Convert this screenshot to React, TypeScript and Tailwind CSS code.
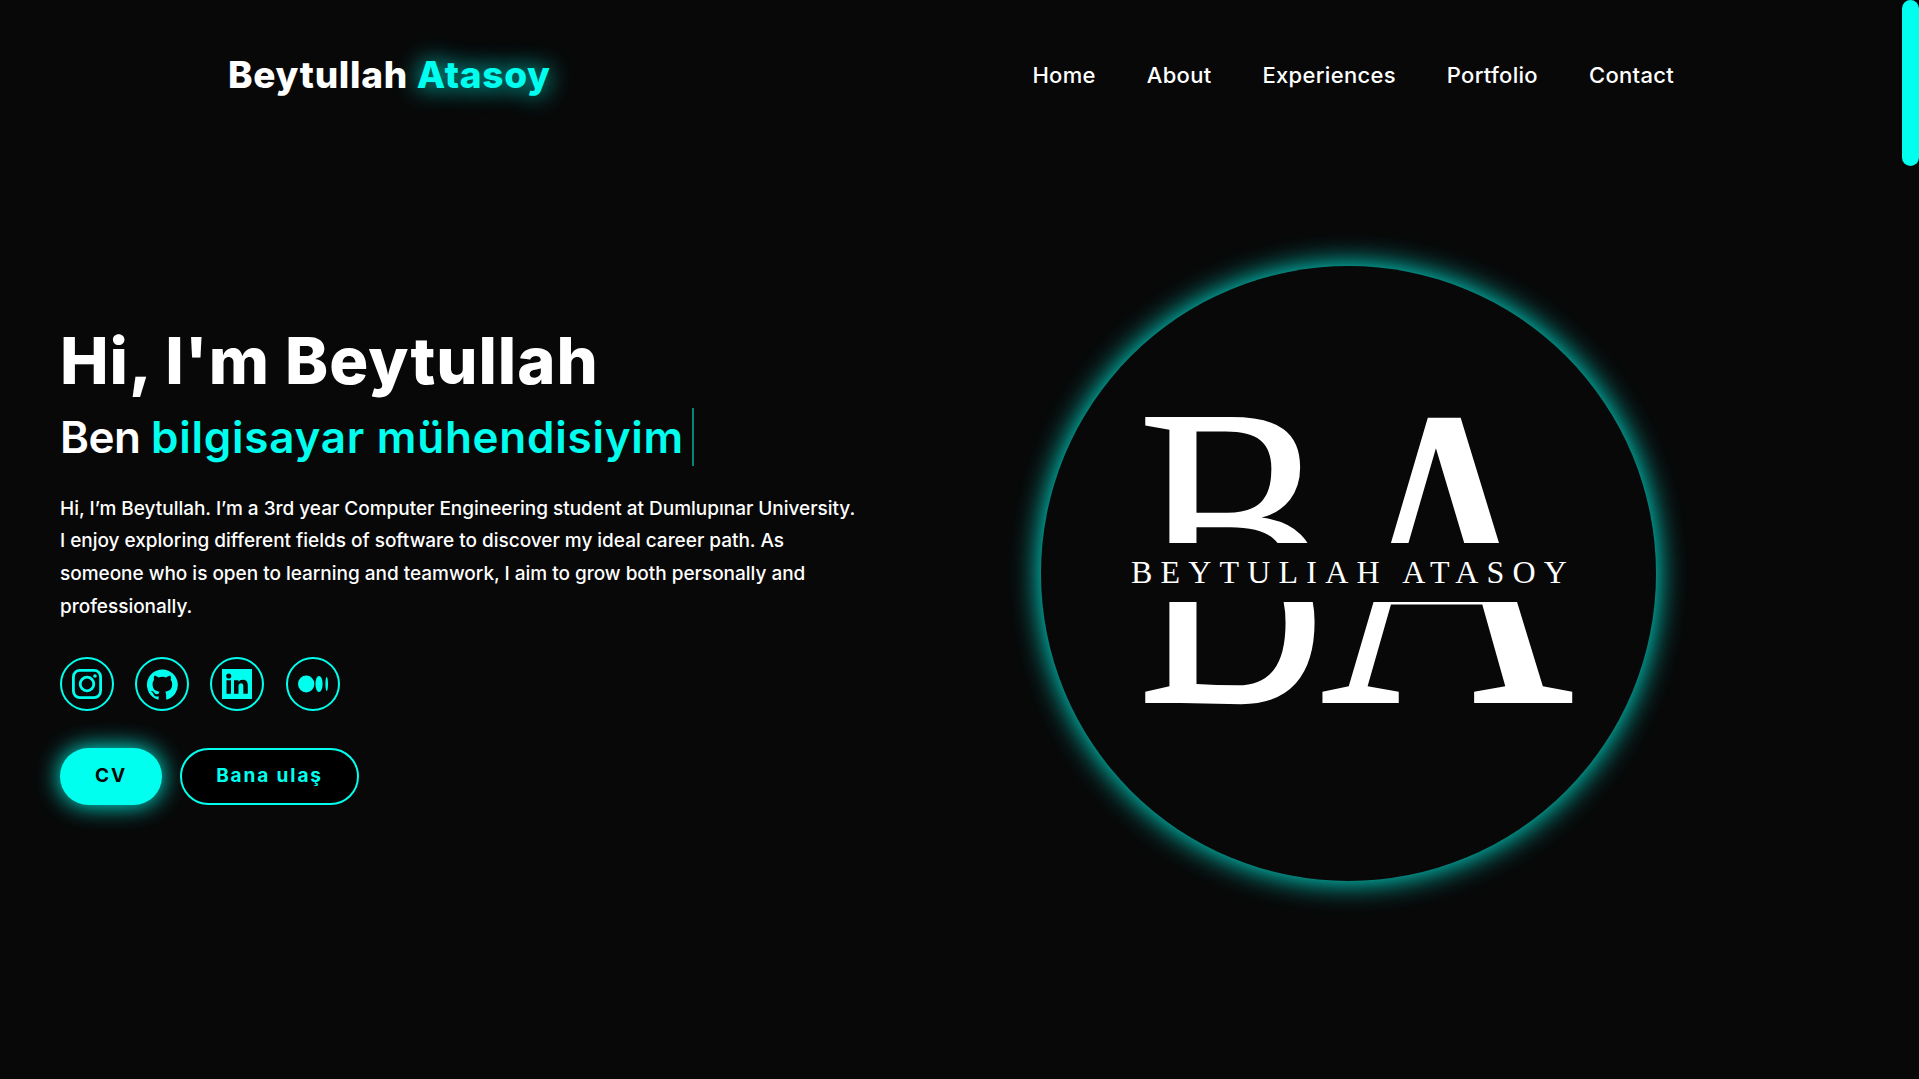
import { useState } from 'react';

const navLinks = ['Home', 'About', 'Experiences', 'Portfolio', 'Contact'];

const Logo = () => (
  <svg viewBox="0 0 615 615" className="w-full h-full">
    <defs>
      <clipPath id="topCut"><rect x="0" y="0" width="615" height="277" /></clipPath>
      <clipPath id="bottomCut"><rect x="0" y="336" width="615" height="279" /></clipPath>
    </defs>
    <g clipPath="url(#topCut)" fill="#fff" fontFamily="'Liberation Serif', serif">
      <text transform="translate(96 366) scale(0.665 0.76)" fontSize="432">B</text>
      <text transform="translate(278 437) scale(0.82 1)" fontSize="432">A</text>
    </g>
    <g clipPath="url(#bottomCut)" fill="#fff" fontFamily="'Liberation Serif', serif">
      <text transform="translate(96 437) scale(0.665 1)" fontSize="432">B</text>
      <text transform="translate(278 437) scale(0.82 1)" fontSize="432">A</text>
    </g>
    <text x="312" y="317" fill="#fff" fontFamily="'Liberation Serif', serif" fontSize="32" textAnchor="middle" letterSpacing="8.2">
      BEYTULIAH ATASOY
    </text>
  </svg>
);

const SocialIcon = ({ children }: { children: React.ReactNode }) => (
  <a className="w-[54px] h-[54px] rounded-full border-2 border-[#00ffee] flex items-center justify-center text-[#00ffee]">
    {children}
  </a>
);

export default function App() {
  const [role] = useState('bilgisayar mühendisiyim');

  return (
    <div className="relative h-[1079px] overflow-hidden bg-[#080808] text-white font-['Inter','Liberation_Sans',sans-serif]">
      <div className="absolute top-0 right-0 w-[17px] h-[166px] rounded-full bg-[#00ffee]" />

      <header className="h-[150px] flex items-center justify-between pl-[228px] pr-[245px]">
        <a className="text-[37px] font-extrabold tracking-[0.7px]">
          Beytullah <span className="text-[#00ffee] [text-shadow:0_0_25px_#00ffee]">Atasoy</span>
        </a>
        <nav className="flex gap-[51px] text-[22px] font-medium tracking-[0.3px]">
          {navLinks.map((link) => (
            <a key={link}>{link}</a>
          ))}
        </nav>
      </header>

      <section className="flex items-center h-[850px] pl-[60px] pr-[263px] pb-[27px]">
        <div className="w-[800px] pt-[4px]">
          <h1 className="text-[65px] font-extrabold leading-[1.2] tracking-[0.95px]">Hi, I'm Beytullah</h1>
          <h3 className="flex items-center text-[44px] font-semibold leading-[64px] mt-[5px] tracking-[0.75px]">
            <span className="tracking-[-0.5px]">Ben&nbsp;</span>
            <span className="text-[#00ffee]">{role}</span>
            <span className="ml-[8px] w-[2px] h-[58px] bg-[#00ffee]/50" />
          </h3>
          <p className="mt-[24px] text-[19px] font-medium leading-[32.6px] tracking-[-0.02px]">
            Hi, I’m Beytullah. I’m a 3rd year Computer Engineering student at Dumlupınar University. I enjoy exploring different fields of software to discover my ideal career path. As someone who is open to learning and teamwork, I aim to grow both personally and professionally.
          </p>
          <div className="flex gap-[21.2px] mt-[34px]">
            <SocialIcon>
              <svg viewBox="0 0 30 30" className="w-[30px] h-[30px]" fill="none" stroke="currentColor" strokeWidth="2.8">
                <rect x="1.4" y="1.4" width="27.2" height="27.2" rx="6.5" />
                <circle cx="15" cy="15" r="6.8" />
                <circle cx="23" cy="7" r="1.8" fill="currentColor" stroke="none" />
              </svg>
            </SocialIcon>
            <SocialIcon>
              <svg viewBox="0 0 24 24" className="w-[31px] h-[31px]" fill="currentColor">
                <path d="M12 .3a12 12 0 0 0-3.800 23.400c.6.1.8-.3.8-.6v-2c-3.300.7-4-1.600-4-1.600-.6-1.400-1.400-1.800-1.400-1.800-1-.7.1-.7.1-.7 1.200.1 1.800 1.200 1.800 1.200 1 1.800 2.800 1.300 3.500 1 .1-.8.4-1.300.8-1.600-2.700-.3-5.500-1.300-5.500-5.900 0-1.300.5-2.400 1.200-3.200-.1-.3-.5-1.500.1-3.200 0 0 1-.3 3.300 1.200a11.500 11.500 0 0 1 6 0c2.300-1.500 3.300-1.200 3.300-1.200.6 1.700.2 2.900.1 3.200.8.8 1.200 1.900 1.200 3.200 0 4.600-2.800 5.600-5.500 5.900.4.4.8 1.100.8 2.200v3.300c0 .3.2.7.8.6A12 12 0 0 0 12 .3" />
              </svg>
            </SocialIcon>
            <SocialIcon>
              <svg viewBox="0 0 24 24" className="w-[36px] h-[36px]" fill="currentColor">
                <path fillRule="evenodd" d="M2 2h20v20H2zM5 9.500v9h3v-9zM6.500 5a1.700 1.700 0 1 0 0 3.400 1.700 1.700 0 0 0 0-3.400zM10 9.500v9h3v-5c0-1.300.7-2 1.700-2s1.500.7 1.500 2v5h3v-5.500c0-2.700-1.400-3.800-3.300-3.800-1.400 0-2.300.6-2.900 1.500V9.500z" />
              </svg>
            </SocialIcon>
            <SocialIcon>
              <svg viewBox="0 0 30 18" className="w-[30px] h-[18px]" fill="currentColor">
                <ellipse cx="8.200" cy="9" rx="8.200" ry="8.500" />
                <ellipse cx="21" cy="9" rx="3.600" ry="8" />
                <ellipse cx="28.700" cy="9" rx="1.300" ry="7" />
              </svg>
            </SocialIcon>
          </div>
          <div className="flex gap-[18px] mt-[37px]">
            <a className="w-[102px] h-[57px] rounded-full bg-[#00ffee] text-[#060606] flex items-center justify-center text-[19px] font-bold tracking-[1.9px] shadow-[0_0_25px_#00ffee]">
              CV
            </a>
            <a className="w-[179px] h-[57px] rounded-full border-2 border-[#00ffee] bg-black text-[#00ffee] flex items-center justify-center text-[19px] font-bold tracking-[1.9px]">
              Bana ulaş
            </a>
          </div>
        </div>
        <div className="ml-auto -mb-[23px] w-[615px] h-[615px] rounded-full bg-[#080808] shadow-[0_0_30px_#00ffee]">
          <Logo />
        </div>
      </section>
    </div>
  );
}
